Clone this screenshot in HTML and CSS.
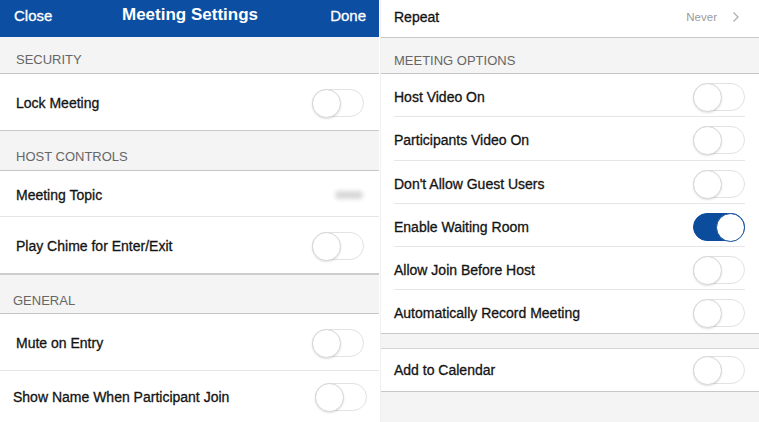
FILE: index.html
```html
<!DOCTYPE html>
<html>
<head>
<meta charset="utf-8">
<title>Meeting Settings</title>
<link rel="stylesheet" href="styles.css">
</head>
<body>
<div class="screen">
  <div class="panel left">
    <div class="nav">
      <span class="nav-btn">Close</span>
      <span class="nav-title">Meeting Settings</span>
      <span class="nav-btn right">Done</span>
    </div>
    <div class="section h37">SECURITY</div>
    <div class="row h57 line-strong">
      <span class="label">Lock Meeting</span>
      <span class="toggle"></span>
    </div>
    <div class="section h40 low">HOST CONTROLS</div>
    <div class="row h46 line-light">
      <span class="label">Meeting Topic</span>
      <span class="blur-value"></span>
    </div>
    <div class="row h58 line-thick">
      <span class="label">Play Chime for Enter/Exit</span>
      <span class="toggle"></span>
    </div>
    <div class="section h39 pad13 low">GENERAL</div>
    <div class="row h57 line-light">
      <span class="label">Mute on Entry</span>
      <span class="toggle"></span>
    </div>
    <div class="row last pad13 padr12">
      <span class="label">Show Name When Participant Join</span>
      <span class="toggle"></span>
    </div>
  </div>

  <div class="panel right-panel">
    <div class="rrow h38 line-strong top">
      <span class="label">Repeat</span>
      <span class="value">Never
        <svg class="chev" width="8" height="12" viewBox="0 0 8 12"><polyline points="1.5,1.5 6,6 1.5,10.5" fill="none" stroke="#b0b0b0" stroke-width="1.3"/></svg>
      </span>
    </div>
    <div class="section h36 rsec">MEETING OPTIONS</div>
    <div class="rlist">
      <div class="ritem h43"><span class="label">Host Video On</span><span class="toggle"></span></div>
      <div class="ritem h44"><span class="label">Participants Video On</span><span class="toggle"></span></div>
      <div class="ritem h43"><span class="label">Don't Allow Guest Users</span><span class="toggle"></span></div>
      <div class="ritem h43"><span class="label">Enable Waiting Room</span><span class="toggle on"></span></div>
      <div class="ritem h43"><span class="label">Allow Join Before Host</span><span class="toggle"></span></div>
      <div class="ritem h43 noline"><span class="label">Automatically Record Meeting</span><span class="toggle"></span></div>
    </div>
    <div class="spacer"></div>
    <div class="rrow h43 line-strong">
      <span class="label">Add to Calendar</span>
      <span class="toggle"></span>
    </div>
    <div class="fill"></div>
  </div>
</div>
</body>
</html>
```

FILE: styles.css
```css
* { box-sizing: border-box; }
html, body {
  margin: 0;
  padding: 0;
  background: #ffffff;
}
body {
  font-family: "Liberation Sans", Arial, sans-serif;
  width: 759px;
  height: 422px;
  overflow: hidden;
}
.screen {
  display: flex;
  gap: 1px;
  width: 759px;
  height: 422px;
}
.panel {
  width: 379px;
  height: 422px;
  display: flex;
  flex-direction: column;
  background: #ffffff;
  overflow: hidden;
}
.right-panel {
  width: 379px;
  border-left: 1px solid #f0f0f0;
}

/* nav */
.nav {
  height: 37px;
  flex: none;
  background: #0c4ea2;
  color: #ffffff;
  display: grid;
  grid-template-columns: 1fr auto 1fr;
  align-items: center;
  padding: 0 13px 7px 14px;
}
.nav-btn {
  font-size: 15px;
  -webkit-text-stroke: 0.3px #ffffff;
}
.nav-btn.right { text-align: right; }
.nav-title {
  font-size: 17px;
  font-weight: bold;
}

/* sections */
.section {
  flex: none;
  background: #f4f4f4;
  color: #666666;
  font-size: 13px;
  display: flex;
  align-items: center;
  padding: 9px 16px 0;
  border-bottom: 1px solid #c6c6c6;
}
.section.low { padding-top: 12px; }
.section.pad13 { padding-left: 13px; }
.section.rsec { padding-left: 13px; }

.h36 { height: 36px; }
.h37 { height: 37px; }
.h38 { height: 38px; }
.h39 { height: 39px; }
.h40 { height: 40px; }
.h43 { height: 43px; }
.h44 { height: 44px; }
.h46 { height: 46px; }
.h57 { height: 57px; }
.h58 { height: 58px; }

/* rows */
.row, .rrow {
  flex: none;
  display: flex;
  align-items: center;
  justify-content: space-between;
  padding: 2px 15px 0 16px;
  background: #ffffff;
}
.row.last {
  flex: 1;
  padding-top: 1px;
  padding-bottom: 0;
}
.row.pad13 { padding-left: 13px; }
.row.padr12 { padding-right: 12px; }
.rrow { padding: 0 14px 0 13px; }
.rrow.top { padding-top: 0; padding-bottom: 4px; }

.line-strong { border-bottom: 1px solid #c8c8c8; }
.line-light { border-bottom: 1px solid #e6e6e6; }
.line-thick { border-bottom: 2px solid #cdcdcd; }

.label {
  font-size: 14px;
  color: #141414;
  -webkit-text-stroke: 0.3px #141414;
  white-space: nowrap;
}

.value {
  display: flex;
  align-items: center;
  gap: 15px;
  font-size: 11.5px;
  color: #9b9b9b;
  padding-right: 5px;
}
.chev { display: block; }

.blur-value {
  width: 28px;
  height: 8px;
  border-radius: 4px;
  background: #d8d8d8;
  filter: blur(2px);
  margin-right: 1px;
}

/* right list */
.rlist {
  flex: none;
  display: flex;
  flex-direction: column;
  border-bottom: 1px solid #c8c8c8;
}
.ritem {
  flex: none;
  margin: 0 14px 0 13px;
  padding-top: 3px;
  display: flex;
  align-items: center;
  justify-content: space-between;
  border-bottom: 1px solid #e6e6e6;
}
.ritem.noline { border-bottom: none; }

.spacer {
  flex: none;
  height: 15px;
  background: #f4f4f4;
  border-bottom: 1px solid #d4d4d4;
}
.fill {
  flex: 1;
  background: #f4f4f4;
}

/* toggles */
.toggle {
  position: relative;
  flex: none;
  width: 52px;
  height: 28px;
  border-radius: 14px;
  border: 1.5px solid #e2e2e2;
  background: #ffffff;
}
.toggle::after {
  content: "";
  position: absolute;
  left: -1px;
  top: -1px;
  width: 27px;
  height: 27px;
  border-radius: 50%;
  background: #ffffff;
  border: 1.5px solid #d6d6d6;
  box-shadow: 0 1px 2px rgba(0, 0, 0, 0.12);
}
.toggle.on {
  background: #0b4c9c;
  border-color: #0b4c9c;
}
.toggle.on::after {
  left: auto;
  right: -1px;
  border-color: #0b4c9c;
  box-shadow: none;
}
```
